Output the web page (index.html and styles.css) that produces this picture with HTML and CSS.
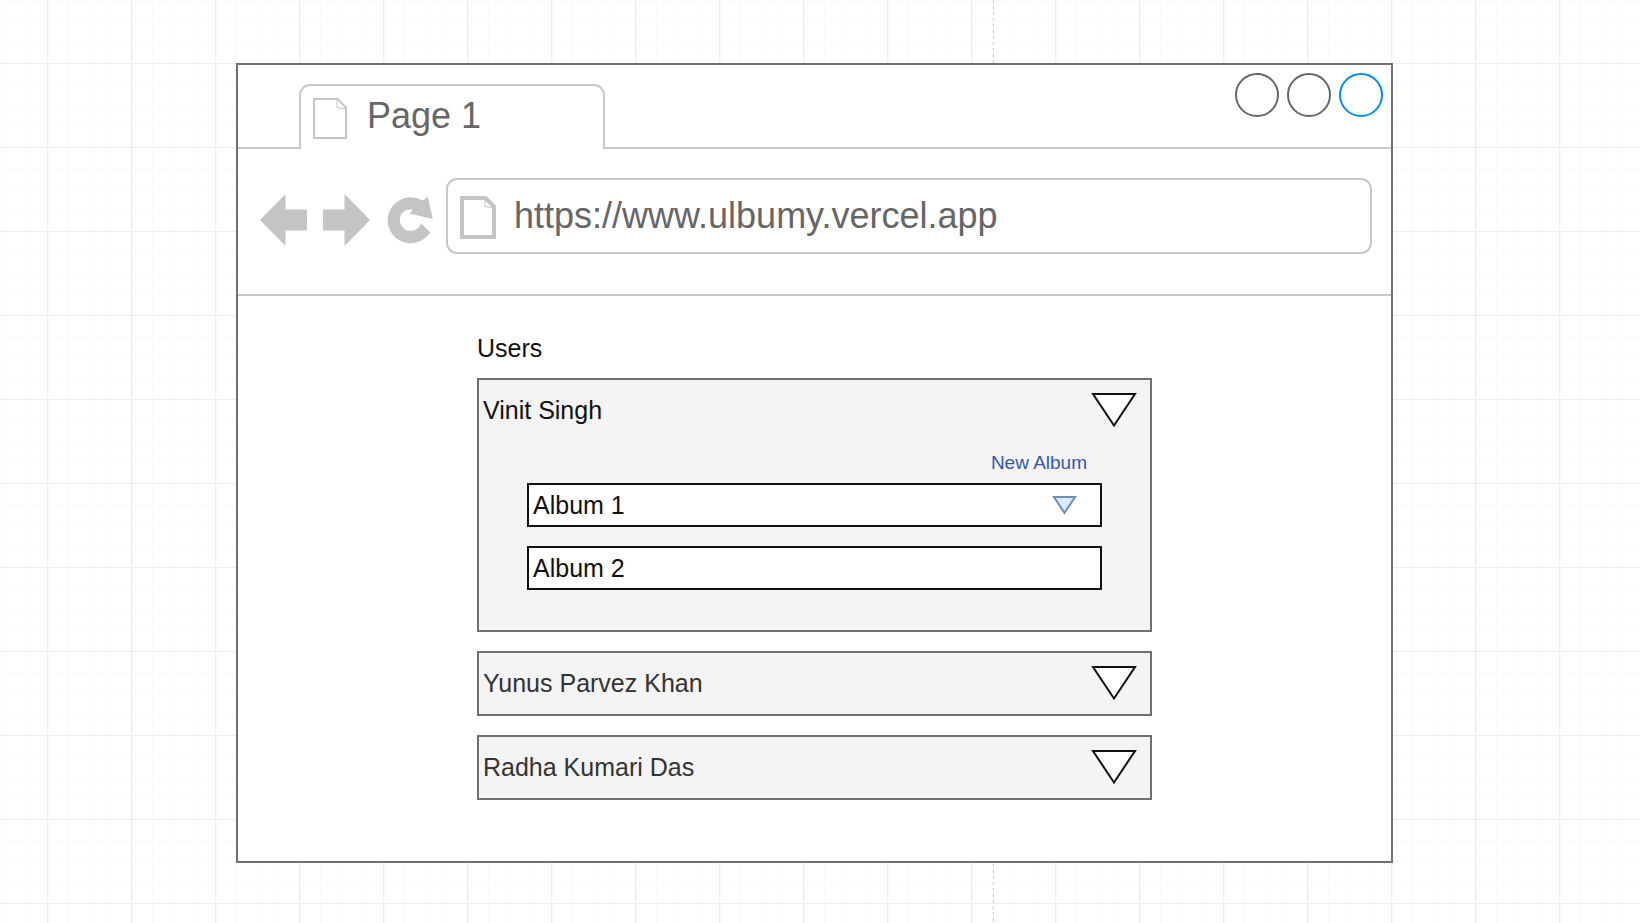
FILE: index.html
```html
<!DOCTYPE html>
<html lang="en">
<head>
<meta charset="utf-8">
<title>Ulbumy wireframe</title>
<link rel="stylesheet" href="styles.css">
</head>
<body>
<main class="window">
  <header class="tab-bar">
    <button class="tab" type="button">
      <svg class="tab-icon" width="34" height="41" viewBox="0 0 34 41" fill="none" stroke="#c4c4c4" aria-hidden="true"><path d="M1 1H24.500L33 9.500V40H1Z" stroke-width="2"/><path d="M24 1.500V9.500Q28 10 33 11" stroke-width="1"/></svg>
      <span>Page 1</span>
    </button>
    <div class="window-controls">
      <button class="control" type="button" aria-label="Minimize"></button>
      <button class="control" type="button" aria-label="Maximize"></button>
      <button class="control control-close" type="button" aria-label="Close"></button>
    </div>
  </header>
  <nav class="toolbar" aria-label="Browser">
    <div class="nav-buttons">
      <button class="nav-button" type="button" aria-label="Back"><svg width="47" height="52" viewBox="0 0 47 52" fill="#c4c4c4"><path d="M0 26L25.500 0V15.500H47V36.500H25.500V52Z"/></svg></button>
      <button class="nav-button" type="button" aria-label="Forward"><svg width="47" height="52" viewBox="0 0 47 52" fill="#c4c4c4"><path d="M47 26L21.500 0V15.500H0V36.500H21.500V52Z"/></svg></button>
      <button class="nav-button" type="button" aria-label="Reload"><svg width="48" height="52" viewBox="-1.500 0 48 52" fill="#c4c4c4"><path d="M42.700 38.300A23 23 0 1 1 34 6Q36 7 40.300 2.500L45.300 25L22 19.500L25.500 15.700C18 14.200 12.300 19 12.300 26.200A11 11 0 0 0 33.700 29.500Z"/></svg></button>
    </div>
    <label class="address">
      <svg width="36" height="43" viewBox="0 0 36 43" fill="none" stroke="#c4c4c4" aria-hidden="true"><path d="M2 2H25.500L34 10.500V41H2Z" stroke-width="4"/><path d="M25 3V10.500Q29 11 34 12" stroke-width="1"/></svg>
      <input class="address-input" type="text" value="https://www.ulbumy.vercel.app" aria-label="Address">
    </label>
  </nav>
  <section class="content">
    <h1 class="title">Users</h1>
    <div class="user-list">
      <article class="user user-open">
        <button class="user-header" type="button" aria-expanded="true">
          <span>Vinit Singh</span>
          <svg width="46" height="35" viewBox="0 0 46 35" fill="#fff" stroke="#111" stroke-width="2" aria-hidden="true"><path d="M2 1H44L23 32.500Z"/></svg>
        </button>
        <div class="albums">
          <a class="new-album" href="#new-album">New Album</a>
          <button class="album" type="button">
            <span>Album 1</span>
            <svg width="25" height="19" viewBox="0 0 25 19" fill="#dae8fc" stroke="#6c8ebf" stroke-width="2" aria-hidden="true"><path d="M2 1H23L12.500 17Z"/></svg>
          </button>
          <button class="album" type="button"><span>Album 2</span></button>
        </div>
      </article>
      <article class="user">
        <button class="user-header" type="button" aria-expanded="false">
          <span>Yunus Parvez Khan</span>
          <svg width="46" height="35" viewBox="0 0 46 35" fill="#fff" stroke="#111" stroke-width="2" aria-hidden="true"><path d="M2 1H44L23 32.500Z"/></svg>
        </button>
      </article>
      <article class="user">
        <button class="user-header" type="button" aria-expanded="false">
          <span>Radha Kumari Das</span>
          <svg width="46" height="35" viewBox="0 0 46 35" fill="#fff" stroke="#111" stroke-width="2" aria-hidden="true"><path d="M2 1H44L23 32.500Z"/></svg>
        </button>
      </article>
    </div>
  </section>
</main>
</body>
</html>
```
FILE: styles.css
```css
* {
  box-sizing: border-box;
}

body {
  margin: 0;
  min-height: 100vh;
  padding: 63px 247px 60px 236px;
  font-family: "Liberation Sans", Arial, sans-serif;
  color: #111;
  background-color: #fff;
  /* page-break guide, major grid lines, minor grid lines */
  background-image:
    linear-gradient(#ccc 3px, transparent 3px),
    linear-gradient(90deg, #eee 1px, #f8f8f8 1px, #f8f8f8 2px, transparent 2px),
    linear-gradient(#eee 1px, transparent 1px),
    linear-gradient(90deg, #f9f9f9 1px, transparent 1px),
    linear-gradient(#f9f9f9 1px, transparent 1px);
  background-size: 1px 6px, 84px 84px, 84px 84px, 21px 21px, 21px 21px;
  background-position: 993px 0, 47px 63px, 47px 63px, 5px 0, 5px 0;
  background-repeat: repeat-y, repeat, repeat, repeat, repeat;
}

button {
  margin: 0;
  padding: 0;
  border: 0;
  background: none;
  font: inherit;
  color: inherit;
  text-align: left;
  cursor: pointer;
}

svg {
  display: block;
  flex: none;
}

.window {
  border: 2px solid #707070;
  background: #fff;
}

.tab-bar {
  display: flex;
  justify-content: space-between;
  padding: 19px 8px 0 61px;
  border-bottom: 2px solid #c8c8c8;
}

.tab {
  display: flex;
  align-items: flex-start;
  gap: 20px;
  width: 306px;
  height: 65px;
  margin-bottom: -2px;
  padding: 12px;
  border: 2px solid #c8c8c8;
  border-bottom: 0;
  border-radius: 11px 11px 0 0;
  background: #fff;
  color: #666;
  font-size: 36px;
  line-height: 36px;
}

.window-controls {
  display: flex;
  gap: 8px;
  margin-top: -11px;
}

.control {
  width: 44px;
  height: 44px;
  border: 2px solid #666;
  border-radius: 50%;
}

.control-close {
  border-color: #008cff;
}

.toolbar {
  display: flex;
  align-items: center;
  gap: 12px;
  padding: 29px 19px 40px 22px;
  border-bottom: 2px solid #c8c8c8;
}

.nav-buttons {
  display: flex;
  gap: 16px;
  padding-top: 8px;
}

.address {
  flex: 1;
  display: flex;
  align-items: center;
  gap: 18px;
  height: 76px;
  padding: 0 12px;
  border: 2px solid #c8c8c8;
  border-radius: 11px;
}

.address svg {
  margin-top: 2px;
}

.address-input {
  flex: 1;
  min-width: 0;
  height: 44px;
  padding: 0;
  border: 0;
  outline: 0;
  background: none;
  color: #666;
  font: inherit;
  font-size: 36px;
}

.content {
  padding: 37px 239px 61px;
}

.title {
  margin: 0;
  font-size: 25px;
  font-weight: 400;
  line-height: 30px;
}

.user-list {
  display: grid;
  gap: 19px;
  margin-top: 15px;
}

.user {
  border: 2px solid #707070;
  background: #f4f4f4;
  color: #333;
}

.user-open {
  color: #111;
}

.user-header {
  display: flex;
  align-items: center;
  justify-content: space-between;
  width: 100%;
  height: 61px;
  padding: 0 13px 0 4px;
  font-size: 25px;
}

.albums {
  display: grid;
  gap: 19px;
  padding: 12px 48px 40px;
}

.new-album {
  justify-self: end;
  margin: 0 15px -9px 0;
  color: #3355bb;
  font-size: 19px;
  line-height: 20px;
  text-decoration: none;
}

.album {
  display: flex;
  align-items: center;
  justify-content: space-between;
  height: 44px;
  padding: 0 23px 0 4px;
  border: 2px solid #111;
  background: #fff;
  font-size: 25px;
}
```
